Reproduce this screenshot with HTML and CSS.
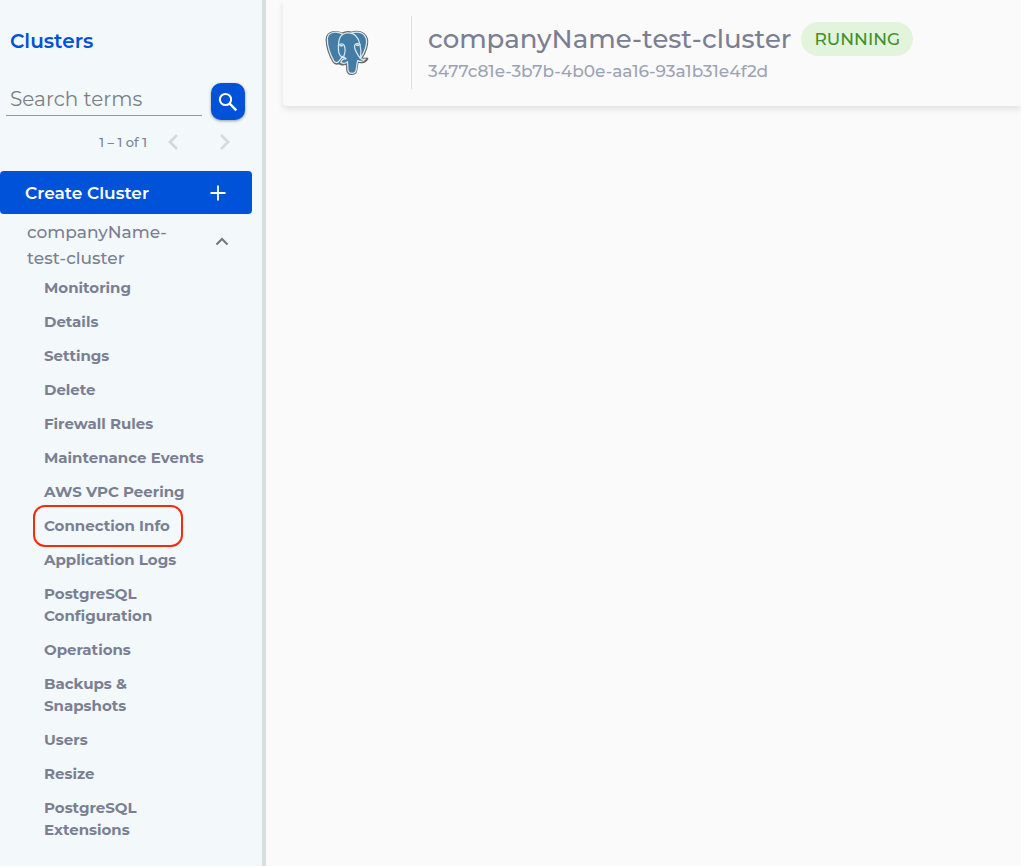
FILE: index.html
```html
<!DOCTYPE html>
<html lang="en">
<head>
  <meta charset="UTF-8" />
  <meta name="viewport" content="width=device-width, initial-scale=1">
  <title>Clusters</title>
  <link rel="stylesheet" href="styles.css">
</head>
<body>

  <aside class="sidebar">
    <h2 class="sidebar-title">Clusters</h2>

    <form class="search">
      <input class="search-input" type="text" placeholder="Search terms" aria-label="Search terms">
      <button class="search-button" type="submit" aria-label="Search">
        <svg width="20" height="20" viewBox="0 0 20 20" fill="none" stroke="currentColor" stroke-width="2">
          <circle cx="7.5" cy="7.5" r="5.6" />
          <path d="M11.7 11.7l6.6 6.6" stroke-width="2.4" />
        </svg>
      </button>
    </form>

    <div class="pager">
      <span class="pager-range">1 – 1 of 1</span>
      <button class="pager-button" type="button" aria-label="Previous page" disabled>
        <svg width="12" height="18" viewBox="0 0 12 18" fill="none" stroke="currentColor" stroke-width="2.6"><path d="M10 2L3 9l7 7" /></svg>
      </button>
      <button class="pager-button" type="button" aria-label="Next page" disabled>
        <svg width="12" height="18" viewBox="0 0 12 18" fill="none" stroke="currentColor" stroke-width="2.6"><path d="M2 2l7 7-7 7" /></svg>
      </button>
    </div>

    <button class="create" type="button">
      Create Cluster
      <svg width="16" height="16" viewBox="0 0 16 16" fill="none" stroke="currentColor" stroke-width="1.8"><path d="M8 .5v15M.5 8h15" /></svg>
    </button>

    <button class="cluster-toggle" type="button" aria-expanded="true">
      <span>companyName-<br>test-cluster</span>
      <svg width="14" height="9" viewBox="0 0 14 9" fill="none" stroke="#757575" stroke-width="2"><path d="M1.500 7.500L7 2l5.500 5.500" /></svg>
    </button>

    <nav>
      <ul class="menu">
        <li><a href="#">Monitoring</a></li>
        <li><a href="#">Details</a></li>
        <li><a href="#">Settings</a></li>
        <li><a href="#">Delete</a></li>
        <li><a href="#">Firewall Rules</a></li>
        <li><a href="#">Maintenance Events</a></li>
        <li><a href="#">AWS VPC Peering</a></li>
        <li><a class="highlighted" href="#">Connection Info</a></li>
        <li><a href="#">Application Logs</a></li>
        <li><a href="#">PostgreSQL<br>Configuration</a></li>
        <li><a href="#">Operations</a></li>
        <li><a href="#">Backups &amp;<br>Snapshots</a></li>
        <li><a href="#">Users</a></li>
        <li><a href="#">Resize</a></li>
        <li><a href="#">PostgreSQL<br>Extensions</a></li>
      </ul>
    </nav>
  </aside>

  <main>
    <header class="cluster-header">
      <div class="logo">
        <svg width="44" height="46" viewBox="0 0 46 48" role="img" aria-label="PostgreSQL" stroke-linecap="round" stroke-linejoin="round">
          <path fill="#437ca5" stroke="#6a6a6a" stroke-width="2.600" d="M18 4C12 1 3 1.500 2 9c-.6 7 3 18 7 24 2 3 5 2.500 7-.5l2-2.500c-1 2-3 4-2 5 2 1 5 1 7-1l.5 8c.5 5 8 5 9 0l1.500-9c4 1 8 0 10-3-3 .5-5 .3-6-.8C42 24 45 14 43.500 9 41 2 33 1 28 3c-4-1.500-7-.8-10 1z" />
          <path fill="#437ca5" stroke="#d8e8f1" stroke-width="1.300" d="M18 4C12 1 3 1.500 2.500 9c-.5 7 3 17 6.500 23 2 3 4.500 2.500 6.500-.5l3-4M28 3c6-2 13-1 15 6 1.500 5-1.500 15-6 20.500 1 1.200 3 1.400 5 1-2 2.500-5 2.800-8 1.500l-1.500 10c-1 4.500-7.500 4.500-8.500 0l-.5-9c-2 2-5 2-7 1 1-3 3-4 5.500-4" />
          <g fill="none" stroke="#d8e8f1" stroke-width="1.300">
            <path d="M21 29c-4 1-7-4-7-9 0-7 0-16 9-17 8-1 12 5 13.500 12" />
            <path d="M14 16c2-2 5-2 6 0 2 4 1 8-.5 12l2 2" />
            <path d="M36.500 15c-2-1.500-5-1-5.500 1-1 4 2 7 4 11l2 2.500c1-5 1-9-.5-14.500z" />
            <path d="M16 16.500h2M33 16h2" stroke-width="1.600" />
          </g>
        </svg>
      </div>
      <div class="cluster-info">
        <div class="cluster-heading">
          <h1>companyName-test-cluster</h1>
          <span class="status">RUNNING</span>
        </div>
        <p class="cluster-id">3477c81e-3b7b-4b0e-aa16-93a1b31e4f2d</p>
      </div>
    </header>
  </main>

</body>
</html>
```

FILE: styles.css
```css
* {
  box-sizing: border-box;
}

body {
  margin: 0;
  display: flex;
  min-height: 100vh;
  border: solid white;
  border-width: 0 3px 2px 0;
  font-family: Montserrat, Inter, sans-serif;
  background: #fafafa;
  color: #7a7f92;
}

button {
  font-family: inherit;
  border: none;
  padding: 0;
  cursor: pointer;
}

h1, h2, p, ul {
  margin: 0;
}

svg {
  display: block;
}

.sidebar {
  flex: none;
  width: 266px;
  padding: 28px 10px 20px 0;
  background: #f3f8fb;
  border-right: 4px solid #d9dee1;
}

.sidebar-title {
  padding-left: 10px;
  font-size: 20px;
  line-height: 26px;
  font-weight: 600;
  color: #0052d9;
}

.search {
  display: flex;
  align-items: flex-start;
  justify-content: space-between;
  margin: 29px 7px 0 6px;
}

.search-input {
  width: 196px;
  height: 33px;
  padding: 0 4px;
  border: none;
  border-bottom: 1px solid #94989b;
  background: transparent;
  font-family: inherit;
  font-size: 20px;
  color: #555;
}

.search-input::placeholder {
  color: #7c7f82;
}

.search-button {
  display: flex;
  align-items: center;
  justify-content: center;
  width: 34px;
  height: 37px;
  border-radius: 10px;
  background: #0052d9;
  color: white;
  box-shadow: 0 1px 3px rgba(0,0,0,0.4);
}

.pager {
  display: flex;
  align-items: center;
  justify-content: flex-end;
  height: 20px;
  margin: 12px 21px 0 0;
}

.pager-range {
  margin-right: 20px;
  font-size: 13px;
  font-weight: 500;
}

.pager-button {
  background: none;
  color: #d5d9db;
}

.pager-button + .pager-button {
  margin-left: 40px;
}

.create {
  display: flex;
  align-items: center;
  justify-content: space-between;
  width: 100%;
  height: 43px;
  margin-top: 19px;
  padding: 0 26px 0 25px;
  border-radius: 4px;
  background: #0052d9;
  color: white;
  font-size: 17px;
  font-weight: 600;
}

.cluster-toggle {
  display: flex;
  align-items: center;
  justify-content: space-between;
  width: 100%;
  margin-top: 5px;
  padding: 0 23px 0 27px;
  background: none;
  color: #7a7f92;
  font-size: 17px;
  line-height: 26px;
  font-weight: 500;
  text-align: left;
}

.cluster-toggle svg {
  margin-bottom: 8px;
}

.menu {
  display: grid;
  gap: 12px;
  margin-top: 6px;
  padding-left: 44px;
  list-style: none;
  font-size: 15px;
  line-height: 22px;
  font-weight: 700;
}

.menu li {
  display: flex;
}

.menu a {
  color: inherit;
  text-decoration: none;
}

.highlighted {
  position: relative;
}

.highlighted::after {
  content: "";
  position: absolute;
  inset: -10px -13px -10px -11px;
  border: 2px solid #f62a0c;
  border-radius: 12px;
}

main {
  flex: 1;
  min-width: 0;
  padding-left: 17px;
}

.cluster-header {
  display: flex;
  padding: 16px 0 17px;
  border-radius: 0 0 0 4px;
  background: #fafafa;
  box-shadow: 0 3px 6px rgba(0,0,0,0.1);
}

.logo {
  display: flex;
  align-items: center;
  justify-content: center;
  width: 129px;
  height: 73px;
  border-right: 1px solid #dcdee0;
}

.cluster-info {
  padding: 6px 0 0 16px;
}

.cluster-heading {
  display: flex;
  align-items: center;
  gap: 10px;
}

h1 {
  font-size: 26px;
  line-height: 34px;
  font-weight: 500;
}

.status {
  padding: 0 13px;
  border-radius: 17px;
  background: #e2f5dc;
  color: #419129;
  font-size: 17px;
  line-height: 34px;
  font-weight: 500;
}

.cluster-id {
  margin-top: 4px;
  color: #9da3b4;
  font-size: 17px;
  line-height: 22px;
  font-weight: 500;
}
```
